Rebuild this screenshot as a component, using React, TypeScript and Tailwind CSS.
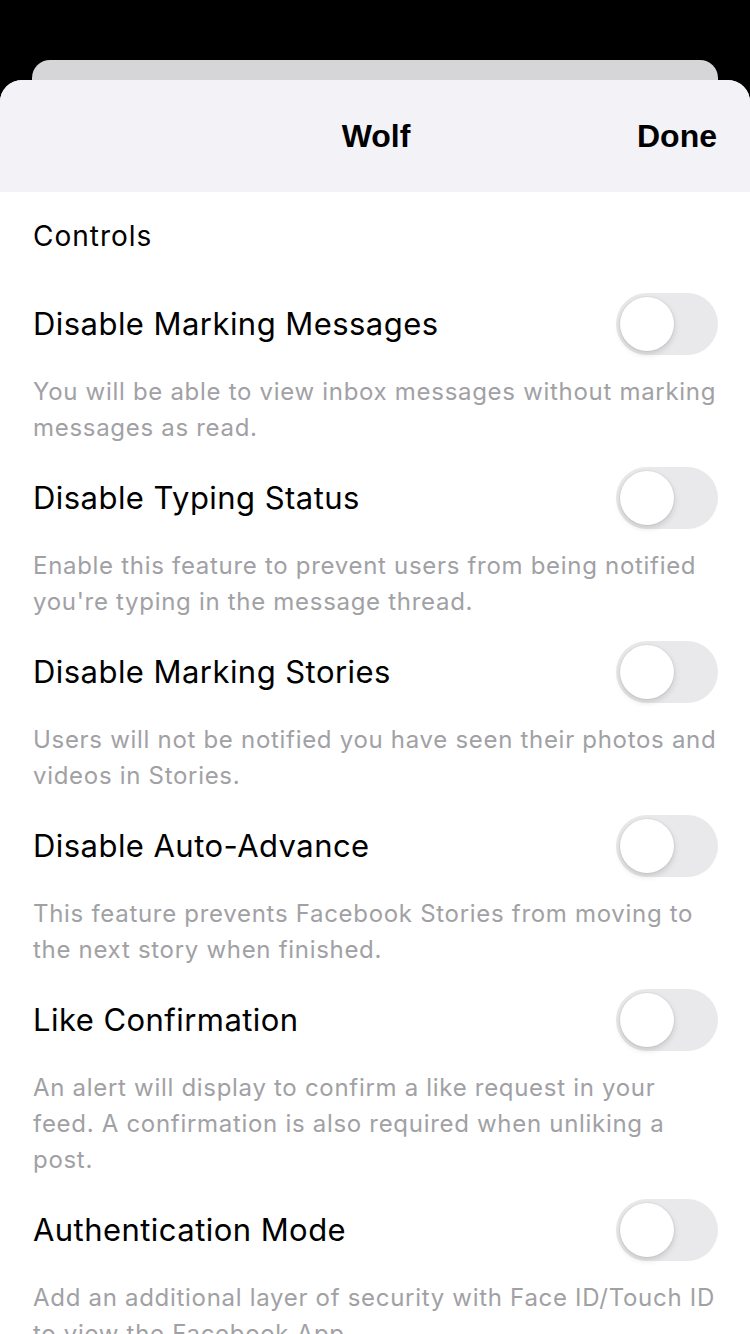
import { FC } from "react";

type Setting = {
  title: string;
  desc: string[];
};

const settings: Setting[] = [
  {
    title: "Disable Marking Messages",
    desc: ["You will be able to view inbox messages without marking", "messages as read."],
  },
  {
    title: "Disable Typing Status",
    desc: ["Enable this feature to prevent users from being notified", "you're typing in the message thread."],
  },
  {
    title: "Disable Marking Stories",
    desc: ["Users will not be notified you have seen their photos and", "videos in Stories."],
  },
  {
    title: "Disable Auto-Advance",
    desc: ["This feature prevents Facebook Stories from moving to", "the next story when finished."],
  },
  {
    title: "Like Confirmation",
    desc: [
      "An alert will display to confirm a like request in your",
      "feed. A confirmation is also required when unliking a",
      "post.",
    ],
  },
  {
    title: "Authentication Mode",
    desc: ["Add an additional layer of security with Face ID/Touch ID", "to view the Facebook App."],
  },
];

const Toggle: FC = () => (
  <div className="w-[102px] h-[62px] rounded-full bg-[#e9e9eb] p-[4px] shrink-0">
    <div className="w-[54px] h-[54px] rounded-full bg-white shadow-[0_3px_6px_rgba(0,0,0,0.15),0_0_0_1px_rgba(0,0,0,0.04)]" />
  </div>
);

const Row: FC<{ item: Setting }> = ({ item }) => (
  <div className="flex flex-col pb-[21px]">
    <div className="flex items-center justify-between h-[62px]">
      <span className="text-[31px] tracking-[0.45px] text-black">{item.title}</span>
      <Toggle />
    </div>
    <div className="mt-[19px] text-[24px] tracking-[0.7px] leading-[36px] text-[#a1a1a5]">
      {item.desc.map((line) => (
        <div key={line} className="whitespace-nowrap">{line}</div>
      ))}
    </div>
  </div>
);

export default function App() {
  return (
    <div
      className="w-[750px] h-[1334px] bg-black overflow-hidden flex flex-col pt-[60px]"
      style={{ fontFamily: 'Inter, "Liberation Sans", sans-serif' }}
    >
      <div className="mx-[32px] h-[40px] bg-[#d6d6d8] rounded-t-[18px] shrink-0" />
      <div className="-mt-[20px] flex-1 bg-white rounded-t-[22px] overflow-hidden flex flex-col">
        <header
          className="h-[112px] bg-[#f2f2f7] flex items-center justify-between px-[33px] shrink-0"
          style={{ fontFamily: '"Liberation Sans", Arial, sans-serif' }}
        >
          <span className="w-[82px]" />
          <span className="text-[32px] font-bold text-black">Wolf</span>
          <span className="text-[32px] font-bold text-black">Done</span>
        </header>
        <div className="px-[33px] pr-[32px] flex flex-col">
          <div className="mt-[26px] h-[36px] leading-[36px] text-[28px] tracking-[1px] text-black">Controls</div>
          <div className="mt-[39px] flex flex-col">
            {settings.map((s) => (
              <Row key={s.title} item={s} />
            ))}
          </div>
        </div>
      </div>
    </div>
  );
}
